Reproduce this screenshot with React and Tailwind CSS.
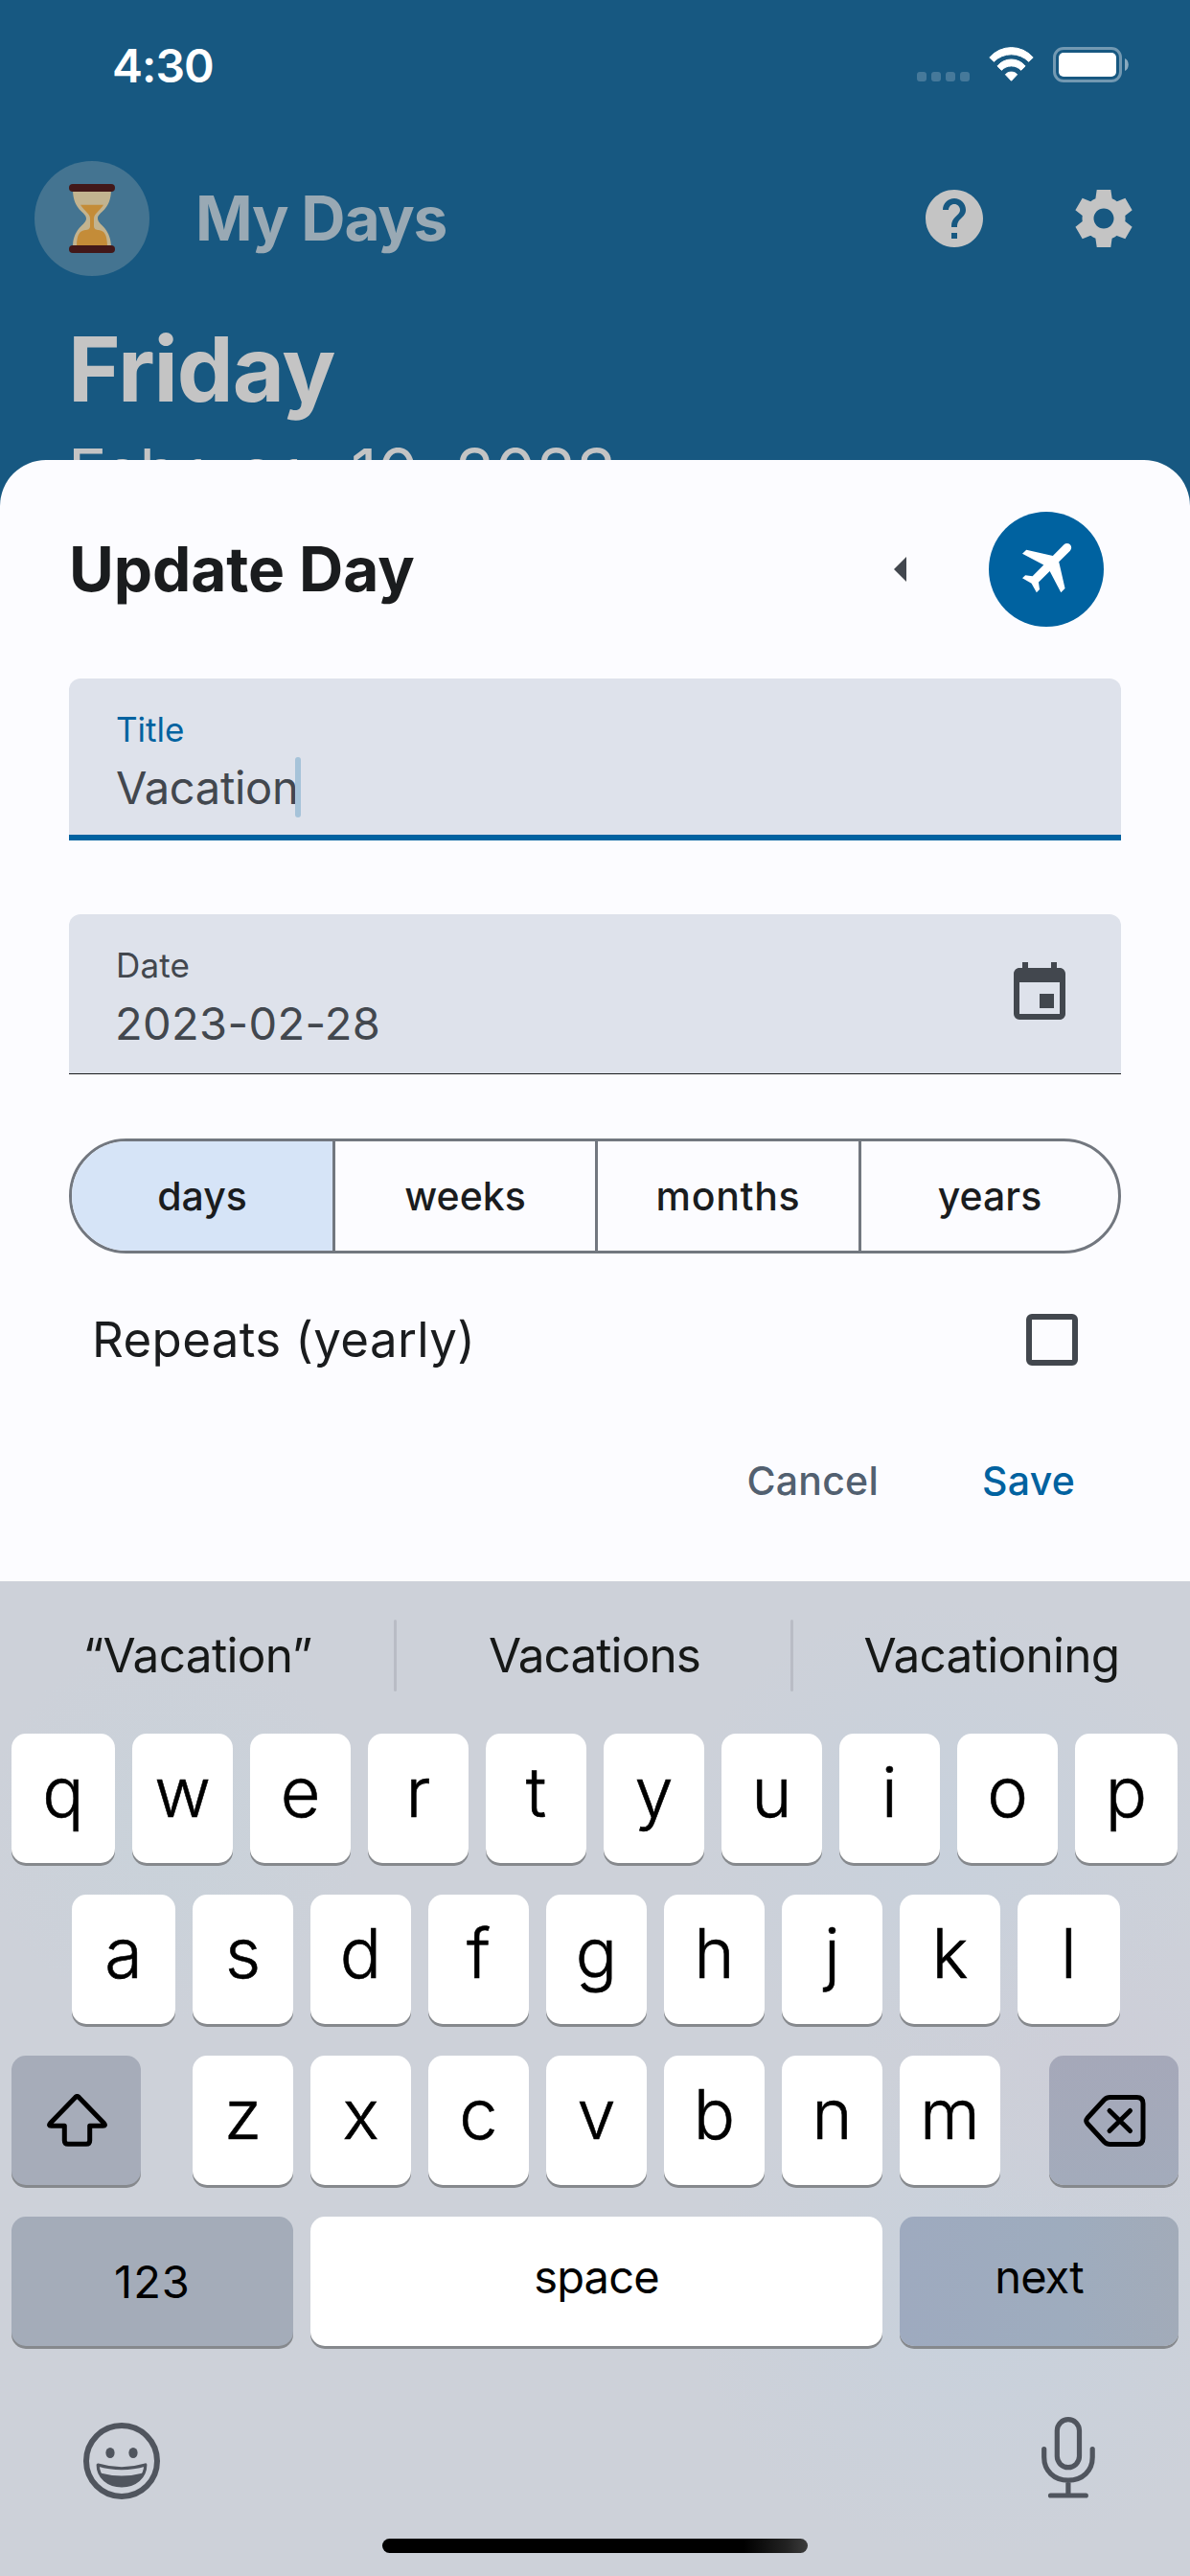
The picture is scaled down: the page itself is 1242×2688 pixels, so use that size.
import { MdEvent, MdFlight, MdHelp } from "react-icons/md";

function Hourglass() {
  return (
    <svg viewBox="0 0 48 72" className="h-[72px] w-[48px]">
      <path
        fill="#c2b38f"
        d="M4 6C4.2 28 18 29 18 36C18 43 4.2 45 4 66H44C43.8 45 30 43 30 36C30 29 43.8 28 44 6Z"
      />
      <path
        fill="#c48c38"
        d="M12 21.7H36C32 28 26 31 26 36V44C26 47 28.5 48 31 48C37 48.6 40 53 40 66H8C8 53 11 48.6 17 48C19.500 48 22 47 22 44V36C22 31 16 28 12 21.7Z"
      />
      <rect width="48" height="8" rx="4" fill="#421819" />
      <rect y="64" width="48" height="8" rx="4" fill="#421819" />
    </svg>
  );
}

function Gear() {
  return (
    <svg viewBox="0 0 24 24" fill="currentColor" className="size-[72px]">
      <path d="M19.44 12.99l-.01.02c.04-.33.08-.67.08-1.01 0-.34-.03-.66-.07-.99l.01.02 2.44-1.92-2.43-4.22-2.87 1.16.01.01c-.52-.4-1.09-.74-1.71-1h.01L14.44 2H9.57l-.44 3.07h.01c-.62.26-1.19.6-1.71 1l.01-.01-2.88-1.17-2.44 4.22 2.44 1.92.01-.02c-.04.33-.07.65-.07.99 0 .34.03.68.08 1.01l-.01-.02-2.1 1.65-.33.26 2.43 4.2 2.88-1.15-.02-.04c.53.41 1.1.75 1.73 1.01h-.03L9.58 22h4.85s.03-.18.06-.42l.38-2.65h-.01c.62-.26 1.2-.6 1.73-1.01l-.02.04 2.88 1.15 2.43-4.2s-.14-.12-.33-.26l-2.11-1.66zM12 15.5c-1.93 0-3.5-1.57-3.5-3.5s1.57-3.5 3.5-3.5 3.5 1.57 3.5 3.5-1.57 3.5-3.5 3.5z" />
    </svg>
  );
}

function StatusBar() {
  return (
    <div className="flex h-[137px] justify-between pl-[117px] pr-[64px] text-white">
      <div className="text-[48px] font-semibold leading-[137px] tracking-[-0.9px]">4:30</div>
      <div className="flex h-[86px] items-end">
        <div className="mb-px mr-[20px] flex gap-[5px]">
          {[0, 1, 2, 3].map((i) => (
            <div key={i} className="size-[10px] rounded-[3px] bg-[#46799a]" />
          ))}
        </div>
        <svg viewBox="0 0 47 36" className="mb-px mr-[20px] h-[36px] w-[47px]" fill="white" stroke="white" strokeWidth="1" strokeLinejoin="round">
          <path d="M.8 11A30 30 0 0 1 46.2 11L41.700 15.300A25.800 25.800 0 0 0 5.300 15.300Z" />
          <path d="M8.900 20A18.700 18.700 0 0 1 38.100 20L33.700 24.300A14 14 0 0 0 13.300 24.300Z" />
          <path d="M23.500 35.300L17.400 28.800C20 25.200 27 25.200 29.600 28.800Z" />
        </svg>
        <svg viewBox="0 0 79 37" className="h-[37px] w-[79px]">
          <rect x="1.500" y="1.500" width="69" height="34" rx="9.500" fill="none" stroke="#7399b2" strokeWidth="3" />
          <rect x="6" y="6" width="60" height="25" rx="5" fill="white" />
          <path d="M75 12C80 14 80 23 75 25Z" fill="#8aaabf" />
        </svg>
      </div>
    </div>
  );
}

function AppHeader() {
  return (
    <div className="h-[480px]">
      <StatusBar />
      <div className="mt-[31px] flex h-[120px] items-center pl-[36px] pr-[54px] text-[#c4c4c4]">
        <div className="flex size-[120px] items-center justify-center rounded-full bg-[#447491]">
          <Hourglass />
        </div>
        <div className="ml-[48px] flex-1 text-[64px] font-bold leading-[120px] tracking-[-1.2px] text-[#99a9b4]">
          My Days
        </div>
        <MdHelp className="mr-[84px] size-[72px]" />
        <Gear />
      </div>
      <div className="pl-[71px] text-[#c4c4c4]">
        <div className="mt-[42px] h-[110px] text-[93.5px] font-bold leading-[110px] tracking-[-1.1px]">Friday</div>
        <div className="mt-[12px] h-[80px] text-[68px] leading-[80px] tracking-[0.3px]">
          <span className="tracking-[-1.3px]">February </span>10, 2023
        </div>
      </div>
    </div>
  );
}

const UNITS = [
  { label: "days", cls: "w-[275px] border-r-[3px] bg-[#d6e4f7]" },
  { label: "weeks", cls: "w-[274px] border-r-[3px]" },
  { label: "months", cls: "w-[275px] border-r-[3px] tracking-[0.7px]" },
  { label: "years", cls: "w-[268px]" },
];

function Sheet() {
  return (
    <div className="relative z-10 h-[1170px] rounded-t-[48px] bg-[#fcfcff] px-[72px] pt-[54px] text-[#1a1c1e]">
      <div className="flex h-[120px] items-center pr-[18px]">
        <div className="flex-1 text-[64px] font-bold leading-[120px] tracking-[-0.1px]">Update Day</div>
        <svg viewBox="0 0 13 26" className="mr-[86px] h-[26px] w-[13px]">
          <path d="M13 0V26L0 13Z" fill="#42474e" />
        </svg>
        <div className="flex size-[120px] items-center justify-center rounded-full bg-[#0062a0]">
          <svg viewBox="0 0 72 72" className="size-[72px] text-white">
            <g transform="translate(4.700 -3.400) rotate(45 36 36)">
              <MdFlight width="72" height="72" size={72} />
            </g>
          </svg>
        </div>
      </div>

      <div className="mt-[54px] h-[169px] rounded-t-[12px] border-b-[6px] border-[#0062a0] bg-[#dee2eb] pl-[49px] pt-[33px]">
        <div className="h-[41px] text-[35px] leading-[41px] text-[#0062a0]">Title</div>
        <div className="mt-[8px] flex h-[63px] text-[47px] leading-[63px] tracking-[-0.3px] text-[#42474e]">
          <span>Vacation</span>
          <span className="-ml-[3px] h-[63px] w-[6px] rounded-full bg-[#a6c3d9]" />
        </div>
      </div>

      <div className="mt-[77px] flex h-[167px] justify-between rounded-t-[12px] border-b border-[#1a1c1e] bg-[#dee2eb] pl-[48px] pr-[49px] text-[#42474e]">
        <div className="pt-[33px]">
          <div className="h-[41px] pl-px text-[35px] leading-[41px] tracking-[0.2px]">Date</div>
          <div className="mt-[8px] text-[47px] leading-[63px] tracking-[0.35px]">2023-02-28</div>
        </div>
        <MdEvent className="mt-[47px] size-[72px]" />
      </div>

      <div className="mt-[67px] flex h-[120px] overflow-hidden rounded-full border-[3px] border-[#72777f] text-center text-[41px] font-medium leading-[114px]">
        {UNITS.map((u) => (
          <div key={u.label} className={`${u.cls} border-[#72777f]`}>
            {u.label}
          </div>
        ))}
      </div>

      <div className="mt-[45px] flex h-[90px] items-center justify-between pl-[24px] pr-[45px]">
        <div className="text-[51px] leading-[90px] tracking-[0.37px]">Repeats (yearly)</div>
        <div className="size-[54px] rounded-[6px] border-[6px] border-[#42474e]" />
      </div>

      <div className="mt-[72px] flex h-[60px] justify-end gap-[108px] pr-[48px] text-[41px] font-medium leading-[60px] tracking-[0.25px]">
        <div className="text-[#526070]">Cancel</div>
        <div className="text-[#0062a0]">Save</div>
      </div>
    </div>
  );
}

function Key({ children, className }) {
  return (
    <div className={`flex h-[135px] items-center justify-center rounded-[15px] shadow-[0_3px_0_#86898d] ${className}`}>
      {children}
    </div>
  );
}

const LETTER = "bg-white pb-[13px] text-[72px] leading-[80px] font-light [-webkit-text-stroke:0.6px_black]";

function Letters({ keys, firstWidth = "w-[105px]", lastWidth = "w-[105px]" }) {
  return keys.split("").map((k, i) => (
    <Key key={k} className={`${LETTER} ${i === 0 ? firstWidth : i === keys.length - 1 ? lastWidth : "w-[105px]"}`}>
      {k}
    </Key>
  ));
}

function Suggestions() {
  return (
    <div className="flex h-[154px] items-center text-center text-[49.5px] leading-[154px] text-[#161817]">
      <div className="w-[411px] pl-px tracking-[-0.65px]">“Vacation”</div>
      <div className="h-[75px] w-[3px] rounded-full bg-[#b9bcc5]" />
      <div className="w-[411px] pl-[2px] tracking-[-0.9px]">Vacations</div>
      <div className="h-[75px] w-[3px] rounded-full bg-[#b9bcc5]" />
      <div className="w-[414px] tracking-[-0.7px]">Vacationing</div>
    </div>
  );
}

function Keyboard() {
  return (
    <div className="h-[1038px] bg-[#cdd1d9] bg-[radial-gradient(ellipse_280px_240px_at_990px_260px,#c8d1dc,transparent),radial-gradient(ellipse_240px_200px_at_1140px_500px,#cdced8,transparent),radial-gradient(ellipse_300px_260px_at_1020px_760px,#c8d1dc,transparent),radial-gradient(ellipse_200px_200px_at_180px_260px,#c9d2da,transparent)] text-black">
      <Suggestions />
      <div className="mt-[5px] flex flex-col gap-[33px]">
        <div className="flex gap-[18px] pl-[12px]">
          <Letters keys="qwertyuiop" firstWidth="w-[108px]" lastWidth="w-[107px]" />
        </div>
        <div className="flex gap-[18px] pl-[75px]">
          <Letters keys="asdfghjkl" firstWidth="w-[108px]" lastWidth="w-[107px]" />
        </div>
        <div className="flex justify-between pl-[12px] pr-[12px]">
          <Key className="w-[135px] bg-[#a6acb9]">
            <svg viewBox="0 0 63 55" className="ml-[2px] h-[55px] w-[63px]" fill="none" stroke="black" strokeWidth="5" strokeLinejoin="round">
              <path d="M29.700 3.400Q31.500 1.700 33.300 3.400L59.500 30.500Q61.800 33.200 58.500 33.200H44.700V48.500Q44.700 52.300 41 52.300H22Q18.300 52.300 18.300 48.500V33.200H4.500Q1.200 33.200 3.500 30.500Z" />
            </svg>
          </Key>
          <div className="ml-[3px] flex gap-[18px]">
            <Letters keys="zxcvbnm" />
          </div>
          <Key className="w-[135px] bg-[linear-gradient(180deg,#a5a8b9,#a3abbb)]">
            <svg viewBox="0 0 65 54" className="ml-[2px] h-[54px] w-[65px]" fill="none" stroke="black" strokeWidth="5" strokeLinecap="round" strokeLinejoin="round">
              <path d="M27.500 2.500H55.500Q62 2.500 62 9V45Q62 51.500 55.500 51.500H27.500Q24 51.500 21.500 49L4 30Q1.500 27 4 24L21.500 5Q24 2.500 27.500 2.500Z" />
              <path d="M27 16.500L48.500 37.500M48.500 16.500L27 37.500" />
            </svg>
          </Key>
        </div>
        <div className="flex gap-[18px] px-[12px] text-[47px] leading-[60px]">
          <Key className="w-[294px] bg-[#a4acb9] tracking-[1px]">123</Key>
          <Key className="w-[597px] bg-white pb-[9px] tracking-[-0.8px]">space</Key>
          <Key className="w-[291px] bg-[linear-gradient(90deg,#9eaabf,#9eacbe_60%,#a2abb9)] pb-[9px] tracking-[-0.9px]">next</Key>
        </div>
      </div>
      <div className="mt-[74px] flex h-[85px] items-end justify-between pl-[87px] pr-[99px]">
        <svg viewBox="0 0 80 80" className="-mb-px size-[80px]" fill="none" stroke="#50555e">
          <circle cx="40" cy="40" r="37" strokeWidth="6" />
          <g fill="#50555e" stroke="none">
            <ellipse cx="28" cy="31.500" rx="4.600" ry="5.500" />
            <ellipse cx="52" cy="31.500" rx="4.600" ry="5.500" />
            <path d="M17.500 52.500Q40 58.500 62.500 52.500C59 62 51 66 40 66C29 66 21 62 17.500 52.500Z" />
          </g>
          <path d="M15.200 44Q40 51.500 64.800 44C64.800 57 54 66 40 66C26 66 15.200 57 15.200 44Z" strokeWidth="3.200" strokeLinejoin="round" />
        </svg>
        <svg viewBox="0 0 56 85" className="h-[85px] w-[56px]" fill="none" stroke="#50555e" strokeWidth="5.200" strokeLinecap="round">
          <rect x="16.300" y="2.700" width="23.200" height="50" rx="11.600" />
          <path d="M2.700 33.500V42C2.700 56 13 66.200 27.900 66.200C43 66.200 53.200 56 53.200 42V33.500M27.900 66.200V82M9.500 82H46.300" />
        </svg>
      </div>
      <div className="ml-[399px] mt-[42px] h-[15px] w-[444px] rounded-full bg-[linear-gradient(90deg,#000_85%,#222_95%,#3c3c3c)]" />
    </div>
  );
}

export default function App() {
  return (
    <div className="h-[2688px] w-[1242px] overflow-hidden whitespace-nowrap bg-[#175881] font-['Inter','Liberation_Sans',sans-serif]">
      <AppHeader />
      <Sheet />
      <Keyboard />
    </div>
  );
}
